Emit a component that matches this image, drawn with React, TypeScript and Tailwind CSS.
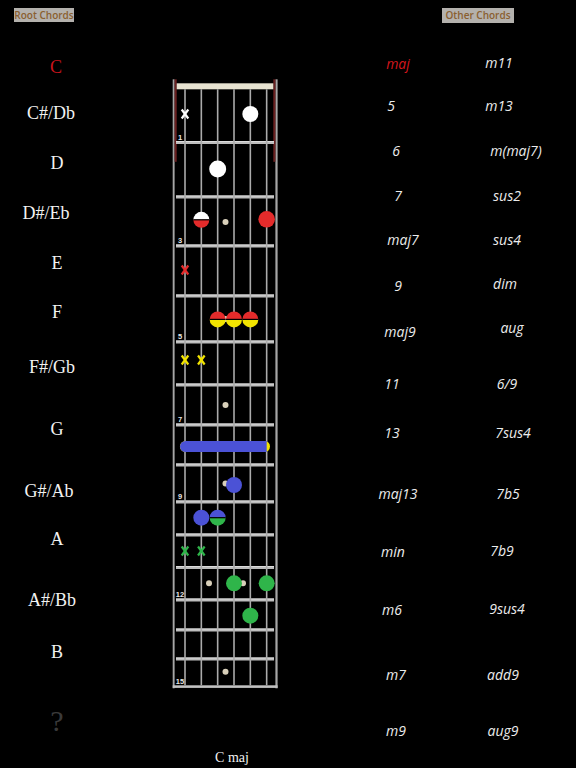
import React from "react";

const roots = [
  { name: "C", cls: "mt-[35px] pr-[2px] text-[#c8141c]" },
  { name: "C#/Db", cls: "mt-[26px] pr-[12px] text-[#f2f2f2]" },
  { name: "D", cls: "mt-[30px] text-[#f2f2f2]" },
  { name: "D#/Eb", cls: "mt-[30px] pr-[22px] text-[#f2f2f2]" },
  { name: "E", cls: "mt-[30px] text-[#f2f2f2]" },
  { name: "F", cls: "mt-[29px] text-[#f2f2f2]" },
  { name: "F#/Gb", cls: "mt-[35px] pr-[10px] text-[#f2f2f2]" },
  { name: "G", cls: "mt-[42px] text-[#f2f2f2]" },
  { name: "G#/Ab", cls: "mt-[42px] pr-[16px] text-[#f2f2f2]" },
  { name: "A", cls: "mt-[28px] text-[#f2f2f2]" },
  { name: "A#/Bb", cls: "mt-[41px] pr-[10px] text-[#f2f2f2]" },
  { name: "B", cls: "mt-[32px] text-[#f2f2f2]" },
];

const colA = [
  { name: "maj", cls: "mt-[31px] pl-[4px] text-[#d4161c]" },
  { name: "5", cls: "mt-[22px] pr-[10px]" },
  { name: "6", cls: "mt-[25px]" },
  { name: "7", cls: "mt-[25px] pl-[4px]" },
  { name: "maj7", cls: "mt-[24px] pl-[14px]" },
  { name: "9", cls: "mt-[26px] pl-[4px]" },
  { name: "maj9", cls: "mt-[26px] pl-[8px]" },
  { name: "11", cls: "mt-[32px] pr-[8px]" },
  { name: "13", cls: "mt-[29px] pr-[8px]" },
  { name: "maj13", cls: "mt-[41px] pl-[4px]" },
  { name: "min", cls: "mt-[38px] pr-[6px]" },
  { name: "m6", cls: "mt-[38px] pr-[8px]" },
  { name: "m7", cls: "mt-[45px]" },
  { name: "m9", cls: "mt-[36px]" },
];

const colB = [
  { name: "m11", cls: "mt-[30px] pr-[14px]" },
  { name: "m13", cls: "mt-[23px] pr-[14px]" },
  { name: "m(maj7)", cls: "mt-[25px] pl-[20px]" },
  { name: "sus2", cls: "mt-[25px] pl-[2px]" },
  { name: "sus4", cls: "mt-[24px] pl-[2px]" },
  { name: "dim", cls: "mt-[24px] pr-[2px]" },
  { name: "aug", cls: "mt-[24px] pl-[12px]" },
  { name: "6/9", cls: "mt-[36px] pl-[2px]" },
  { name: "7sus4", cls: "mt-[29px] pl-[14px]" },
  { name: "7b5", cls: "mt-[41px] pl-[4px]" },
  { name: "7b9", cls: "mt-[37px] pr-[8px]" },
  { name: "9sus4", cls: "mt-[38px] pl-[2px]" },
  { name: "add9", cls: "mt-[46px] pr-[6px]" },
  { name: "aug9", cls: "mt-[36px] pr-[6px]" },
];

// fretboard geometry, local to the svg (page x - 170, page y - 78)
const STRINGS = [15, 31.33, 47.67, 64, 80.33, 96.67];
const FRETS = [64.5, 119, 168, 218, 264, 307, 347, 387, 424, 457, 489.5, 522, 552, 581];
const LABELS = [
  { n: "1", y: 64.5 },
  { n: "3", y: 168 },
  { n: "5", y: 264 },
  { n: "7", y: 347 },
  { n: "9", y: 424 },
  { n: "12", y: 522 },
  { n: "15", y: 608.5 },
];

const RED = "#e42b2b";
const YELLOW = "#f2e400";
const BLUE = "#4b52d6";
const GREEN = "#2fb54a";
const INLAY = "#d9d0ba";

function Dot({ x, y, fill, r = 8 }: { x: number; y: number; fill: string; r?: number }) {
  return <circle cx={x} cy={y} r={r} fill={fill} />;
}

function Split({ x, y, top, bottom, r = 8 }: { x: number; y: number; top: string; bottom: string; r?: number }) {
  return (
    <g>
      <path d={`M ${x - r} ${y} A ${r} ${r} 0 0 1 ${x + r} ${y} Z`} fill={top} />
      <path d={`M ${x - r} ${y} A ${r} ${r} 0 0 0 ${x + r} ${y} Z`} fill={bottom} />
      <line x1={x - r} y1={y} x2={x + r} y2={y} stroke="#000" strokeWidth={1.2} />
    </g>
  );
}

function Mark({ x, y, color }: { x: number; y: number; color: string }) {
  return (
    <g stroke={color} strokeWidth={2.2}>
      <line x1={x - 3.3} y1={y - 4.5} x2={x + 3.3} y2={y + 4.5} />
      <line x1={x + 3.3} y1={y - 4.5} x2={x - 3.3} y2={y + 4.5} />
    </g>
  );
}

function Fretboard() {
  return (
    <svg width={110} height={614} viewBox="0 0 110 614" className="block">
      {/* rails */}
      <rect x={2.7} y={1.3} width={1.9} height={609} fill="#a6a6a6" />
      <rect x={105.4} y={1.3} width={2.2} height={609} fill="#a6a6a6" />
      <rect x={4.6} y={1.3} width={2.1} height={82.5} fill="#6a2020" />
      <rect x={103.3} y={1.3} width={2.1} height={82.5} fill="#6a2020" />
      {/* nut */}
      <rect x={6.7} y={5.3} width={96.6} height={6} fill="#e7e3d1" />
      {/* frets */}
      {FRETS.map((f) => (
        <g key={f}>
          <rect x={6} y={f - 1.5} width={98} height={3} fill="#bdbdbd" />
          <rect x={6} y={f - 1.5} width={98} height={1} fill="#dcdcdc" />
        </g>
      ))}
      <rect x={2.7} y={607.3} width={104.9} height={2.6} fill="#c2c2c2" />
      {/* strings */}
      {STRINGS.map((s) => (
        <line key={s} x1={s} y1={11.3} x2={s} y2={607.3} stroke="#ababab" strokeWidth={1.6} />
      ))}
      {/* fret numbers */}
      {LABELS.map((l) => (
        <text
          key={l.n}
          x={10}
          y={l.y - 3}
          textAnchor="middle"
          fontSize={7.5}
          fontWeight={700}
          fill="#e6e6e6"
          fontFamily="'Liberation Sans', sans-serif"
        >
          {l.n}
        </text>
      ))}
      {/* inlays */}
      <Dot x={55.5} y={144} r={3} fill={INLAY} />
      <Dot x={55.5} y={241} r={3} fill={INLAY} />
      <Dot x={55.5} y={327} r={3} fill={INLAY} />
      <Dot x={55.5} y={405.5} r={3} fill={INLAY} />
      <Dot x={39} y={505.3} r={3} fill={INLAY} />
      <Dot x={73} y={505.3} r={3} fill={INLAY} />
      <Dot x={55.5} y={593.7} r={3} fill={INLAY} />

      {/* C shapes */}
      <Mark x={15} y={36} color="#ffffff" />
      <Dot x={80.33} y={36} fill="#ffffff" />
      <Dot x={47.67} y={91} r={8.5} fill="#ffffff" />
      <Split x={31.33} y={141.8} top="#ffffff" bottom={RED} />
      <Dot x={96.67} y={141.3} r={8.3} fill={RED} />

      <Mark x={15} y={192} color={RED} />
      <Split x={47.67} y={241.4} top={RED} bottom={YELLOW} />
      <Split x={64} y={241.4} top={RED} bottom={YELLOW} />
      <Split x={80.33} y={241.4} top={RED} bottom={YELLOW} />

      <Mark x={15} y={282} color={YELLOW} />
      <Mark x={31.33} y={282} color={YELLOW} />

      <rect x={10} y={363} width={90} height={11} rx={5.5} fill={YELLOW} />
      <path d="M 15.5 363 H 96.7 V 374 H 15.5 A 5.5 5.5 0 0 1 15.5 363 Z" fill={BLUE} />

      <Dot x={64} y={407} fill={BLUE} />
      <Dot x={31.33} y={439.7} fill={BLUE} />
      <Split x={47.67} y={439.7} top={BLUE} bottom={GREEN} />

      <Mark x={15} y={473} color={GREEN} />
      <Mark x={31.33} y={473} color={GREEN} />

      <Dot x={64} y={505.3} fill={GREEN} />
      <Dot x={96.67} y={505.3} fill={GREEN} />
      <Dot x={80.33} y={537.7} fill={GREEN} />
    </svg>
  );
}

export default function App() {
  return (
    <div className="flex h-[768px] w-[576px] overflow-hidden bg-black">
      {/* root chords */}
      <div className="flex w-[114px] flex-col font-['Liberation_Serif',serif] text-[18px] leading-[20px]">
        <div className="ml-[14px] mt-[8px] h-[14px] w-[60px] bg-[#b4b1ad] text-center font-['Open_Sans',sans-serif] text-[10px] font-semibold leading-[14px] text-[#8a5f30]">
          Root Chords
        </div>
        {roots.map((r) => (
          <div key={r.name} className={`h-[20px] text-center ${r.cls}`}>
            {r.name}
          </div>
        ))}
        <div className="mt-[43px] h-[32px] text-center text-[30px] leading-[32px] text-[#3a3a3a]">?</div>
      </div>

      {/* fretboard */}
      <div className="flex w-[236px] flex-col">
        <div className="ml-[56px] mt-[78px]">
          <Fretboard />
        </div>
        <div className="mt-[58px] h-[16px] text-center font-['Liberation_Serif',serif] text-[14px] leading-[16px] text-[#f2f2f2]">
          C maj
        </div>
      </div>

      {/* other chords */}
      <div className="flex w-[226px] flex-col font-['Open_Sans',sans-serif] text-[14px] italic leading-[20px] text-[#ececec]">
        <div className="ml-[92px] mt-[8px] h-[15px] w-[72px] bg-[#b4b1ad] text-center text-[10px] font-semibold not-italic leading-[15px] text-[#8a5f30]">
          Other Chords
        </div>
        <div className="flex">
          <div className="flex w-[92px] flex-col">
            {colA.map((c) => (
              <div key={c.name} className={`h-[20px] text-center ${c.cls}`}>
                {c.name}
              </div>
            ))}
          </div>
          <div className="flex w-[128px] flex-col">
            {colB.map((c) => (
              <div key={c.name} className={`h-[20px] text-center ${c.cls}`}>
                {c.name}
              </div>
            ))}
          </div>
        </div>
      </div>
    </div>
  );
}
